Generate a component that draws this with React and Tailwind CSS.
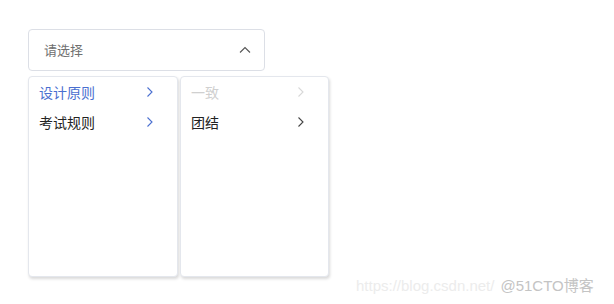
import React from "react";

const Chevron = ({ color }) => (
  <svg width="8" height="12" viewBox="0 0 8 12" fill="none">
    <path d="M1.5 1.5 L6 6 L1.5 10.5" stroke={color} strokeWidth="1.1" />
  </svg>
);

const Item = ({ label, color, chev }) => (
  <div className="h-[30px] flex items-center justify-between pl-[10px] pr-[23px]">
    <span className="text-[14px]" style={{ color }}>{label}</span>
    <Chevron color={chev} />
  </div>
);

export default function App() {
  return (
    <div
      className="relative w-[614px] h-[304px] bg-white pt-[29px] pl-[28px]"
      style={{ fontFamily: '"Microsoft YaHei", "Noto Sans CJK SC", "Noto Sans", sans-serif' }}
    >
      <div className="w-[237px] h-[42px] border border-[#dcdfe6] rounded-[4px] flex items-center justify-between pl-[15px] pr-[13px]">
        <span className="text-[13px] text-[#707070]">请选择</span>
        <svg width="12" height="8" viewBox="0 0 12 8" fill="none">
          <path d="M1 6.5 L6 1.5 L11 6.5" stroke="#555" strokeWidth="1.1" />
        </svg>
      </div>
      <div className="flex gap-[2px] mt-[5px]">
        <div className="w-[150px] h-[201px] border border-[#e4e7ed] rounded-[4px] bg-white shadow-[1px_2px_3px_rgba(0,0,0,0.15)]">
          <Item label="设计原则" color="#4a6fd0" chev="#4a6fd0" />
          <Item label="考试规则" color="#222" chev="#4a6fd0" />
        </div>
        <div className="w-[149px] h-[201px] border border-[#e4e7ed] rounded-[4px] bg-white shadow-[1px_2px_3px_rgba(0,0,0,0.15)]">
          <Item label="一致" color="#d0d0d0" chev="#d8d8d8" />
          <Item label="团结" color="#222" chev="#444" />
        </div>
      </div>
      <div className="absolute left-[356px] top-[275px] text-[15px] whitespace-nowrap" style={{ fontFamily: '"Liberation Sans", "Noto Sans CJK SC", sans-serif' }}>
        <span className="text-[#ececec]">https://blog.csdn.net/</span>
        <span className="text-[#c4c4c4] ml-[6px]">@51CTO博客</span>
      </div>
    </div>
  );
}
